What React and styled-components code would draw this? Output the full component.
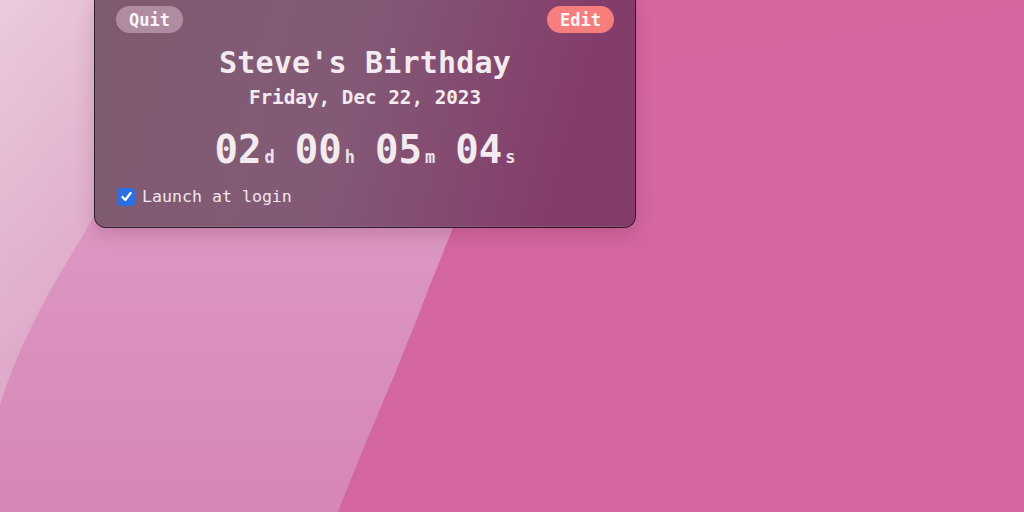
import React from 'react'
import styled, { createGlobalStyle } from 'styled-components'

const GlobalStyle = createGlobalStyle`
    html, body {
        margin: 0;
        padding: 0;
        background: #d466a0;
    }
`

const Desktop = styled.div`
    position: relative;
    width: 1024px;
    height: 512px;
    overflow: hidden;
    font-family: "DejaVu Sans Mono", "Liberation Mono", monospace;
`

const Wallpaper = styled.svg`
    position: absolute;
    inset: 0;
    z-index: 0;
`

const Panel = styled.div`
    position: relative;
    z-index: 1;
    width: 540px;
    height: 227px;
    margin-left: 94px;
    box-sizing: content-box;

    display: flex;
    flex-direction: column;
    align-items: center;

    border: 1px solid #2f1e28;
    border-top: none;
    border-radius: 0 0 12px 12px;
    background: linear-gradient(105deg, #7e5b70 0%, #835a76 45%, #843d6b 85%, #833b69 100%);
    box-shadow: 0 6px 18px rgba(70, 20, 50, 0.18), inset 0 -1px 0 rgba(255, 255, 255, 0.08);

    color: #f3ebf0;
`

const TopBar = styled.div`
    align-self: stretch;
    display: flex;
    justify-content: space-between;
    padding: 6px 21px 0 21px;
`

const Pill = styled.button`
    height: 27px;
    width: 67px;
    border: none;
    border-radius: 14px;
    padding: 0;

    font-family: inherit;
    font-size: 17px;
    font-weight: bold;
    color: #fbf5f8;
    background: ${p => p.$accent ? '#f67f7e' : 'rgba(236, 200, 222, 0.45)'};
`

const Title = styled.h1`
    margin: 12px 0 0 0;
    font-size: 30px;
    line-height: 36px;
    font-weight: bold;
    letter-spacing: 0.2px;
`

const DateLine = styled.div`
    margin-top: 5px;
    font-size: 19.3px;
    line-height: 24px;
    font-weight: bold;
`

const Countdown = styled.div`
    margin-top: 20px;
    display: flex;
    gap: 20px;
    align-items: baseline;
`

const Unit = styled.div`
    display: flex;
    align-items: baseline;
    gap: 3px;
`

const Digits = styled.span`
    font-size: 39px;
    line-height: 40px;
    font-weight: bold;
`

const Suffix = styled.span`
    font-size: 17px;
    font-weight: bold;
    color: #eee2ea;
`

const LoginRow = styled.label`
    align-self: stretch;
    display: flex;
    align-items: center;
    gap: 7px;
    margin-top: 17px;
    padding-left: 22px;
    font-size: 16.6px;
    color: #f1e6ee;
`

const Box = styled.span`
    width: 18px;
    height: 18px;
    border-radius: 4px;
    background: #2c6fe4;
    display: flex;
    align-items: center;
    justify-content: center;
`

const countdown = [
    { value: '02', unit: 'd' },
    { value: '00', unit: 'h' },
    { value: '05', unit: 'm' },
    { value: '04', unit: 's' },
]

const App = () => {
    return (
        <Desktop>
            <GlobalStyle />
            <Wallpaper width="1024" height="512" viewBox="0 0 1024 512">
                <defs>
                    <linearGradient id="base" x1="0" y1="0" x2="0.3" y2="1">
                        <stop offset="0" stopColor="#d5679f" />
                        <stop offset="1" stopColor="#d3669f" />
                    </linearGradient>
                    <linearGradient id="band" x1="0" y1="0" x2="0" y2="1">
                        <stop offset="0" stopColor="#e2a3c8" />
                        <stop offset="0.5" stopColor="#db95c0" />
                        <stop offset="1" stopColor="#d685b4" />
                    </linearGradient>
                    <linearGradient id="light" x1="0" y1="0" x2="0.4" y2="1">
                        <stop offset="0" stopColor="#e9cbdd" />
                        <stop offset="0.6" stopColor="#e2b2ce" />
                        <stop offset="1" stopColor="#dda3c6" />
                    </linearGradient>
                </defs>
                <rect width="1024" height="512" fill="url(#base)" />
                <path d="M0,0 L525,0 C495,130 458,215 428,290 C400,365 370,430 338,512 L0,512 Z" fill="url(#band)" />
                <path d="M0,0 L140,0 C130,110 112,188 86,230 C56,280 22,335 0,405 Z" fill="url(#light)" />
            </Wallpaper>

            <Panel>
                <TopBar>
                    <Pill>Quit</Pill>
                    <Pill $accent>Edit</Pill>
                </TopBar>

                <Title>Steve's Birthday</Title>
                <DateLine>Friday, Dec 22, 2023</DateLine>

                <Countdown>
                    {countdown.map(c => (
                        <Unit key={c.unit}>
                            <Digits>{c.value}</Digits>
                            <Suffix>{c.unit}</Suffix>
                        </Unit>
                    ))}
                </Countdown>

                <LoginRow>
                    <Box>
                        <svg width="13" height="13" viewBox="0 0 13 13">
                            <path d="M2.5 7 L5.3 10 L10.6 3" fill="none" stroke="#fff" strokeWidth="2.2" strokeLinecap="round" strokeLinejoin="round" />
                        </svg>
                    </Box>
                    Launch at login
                </LoginRow>
            </Panel>
        </Desktop>
    )
}

export default App
